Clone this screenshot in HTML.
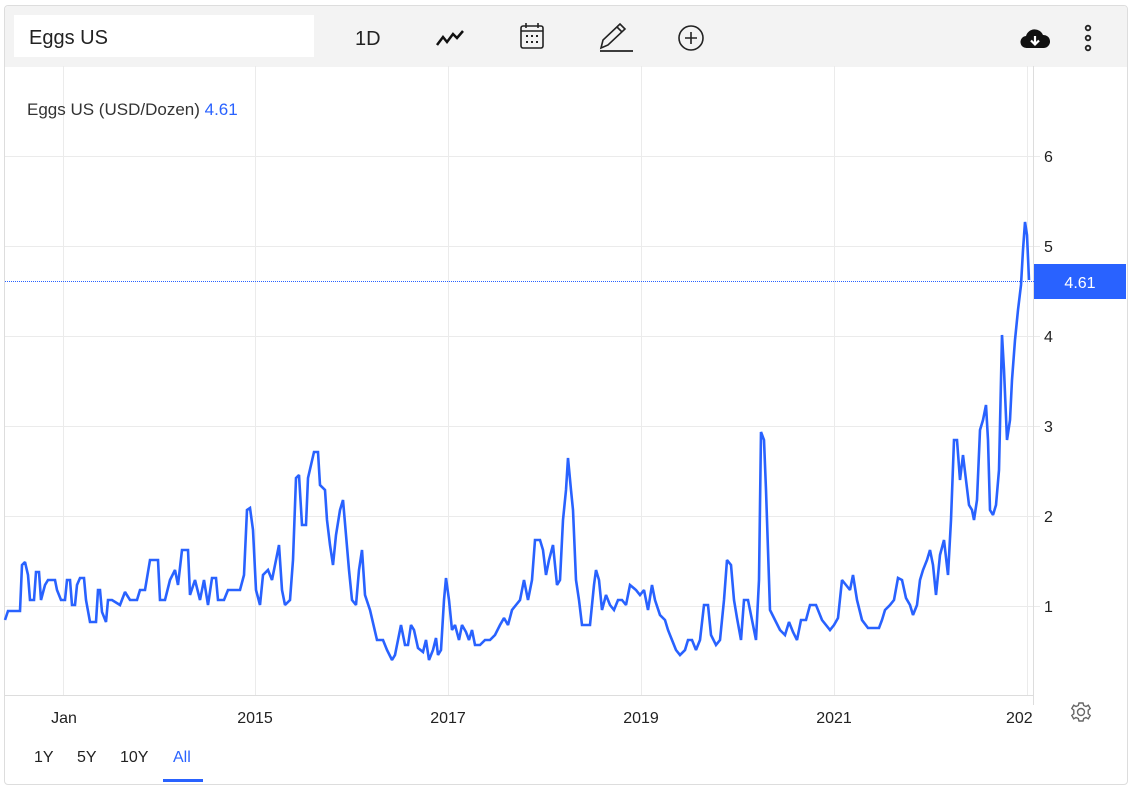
<!DOCTYPE html>
<html><head><meta charset="utf-8"><style>
*{margin:0;padding:0;box-sizing:border-box}
body{width:1138px;height:789px;background:#fff;font-family:"Liberation Sans",Arial,sans-serif;position:relative;overflow:hidden;color:#222}
.frame{position:absolute;left:4px;top:5px;width:1124px;height:780px;border:1px solid #ddd;border-radius:4px;overflow:hidden}
.tb{position:absolute;left:0;top:0;width:100%;height:61px;background:#f3f3f3}
.search{position:absolute;left:9px;top:9px;width:300px;height:42px;background:#fff;font-size:20px;line-height:46px;padding-left:15px;color:#222}
</style></head><body>
<div class="frame">
<div class="tb">
<div class="search">Eggs US</div>
<div style="position:absolute;left:350px;top:22px;font-size:20px;color:#222">1D</div>
<svg style="position:absolute;left:430px;top:22px" width="30" height="20" viewBox="0 0 30 20"><path d="M2 17 L8 9 L12 14 L18 6 L22 10 L28 3" fill="none" stroke="#111" stroke-width="2.5"/></svg>
<svg style="position:absolute;left:513px;top:15px" width="28" height="30" viewBox="0 0 28 30"><rect x="3" y="5" width="22" height="22" rx="2" fill="none" stroke="#222" stroke-width="1.6"/><line x1="3" y1="10" x2="25" y2="10" stroke="#222" stroke-width="1.6"/><line x1="8" y1="2" x2="8" y2="7" stroke="#222" stroke-width="1.6"/><line x1="20" y1="2" x2="20" y2="7" stroke="#222" stroke-width="1.6"/><g fill="#222"><rect x="8" y="14" width="2" height="2"/><rect x="13" y="14" width="2" height="2"/><rect x="18" y="14" width="2" height="2"/><rect x="8" y="20" width="2" height="2"/><rect x="13" y="20" width="2" height="2"/><rect x="18" y="20" width="2" height="2"/></g></svg>
<svg style="position:absolute;left:592px;top:15px" width="38" height="32" viewBox="0 0 38 32"><path d="M4 27 L6 19 L23 3 L28 8 L11 24 Z M20 6 L25 11" fill="none" stroke="#222" stroke-width="1.6"/><line x1="3" y1="30" x2="36" y2="30" stroke="#222" stroke-width="1.8"/></svg>
<svg style="position:absolute;left:672px;top:18px" width="28" height="28" viewBox="0 0 28 28"><circle cx="14" cy="14" r="12" fill="none" stroke="#222" stroke-width="1.6"/><path d="M14 8V20M8 14H20" stroke="#222" stroke-width="1.6"/></svg>
<svg style="position:absolute;left:1014px;top:21px" width="32" height="24" viewBox="0 0 32 24"><path d="M8 21 A6 6 0 0 1 7 9 A9 9 0 0 1 24 8 A6.5 6.5 0 0 1 25 21 Z" fill="#111"/><path d="M16 9V17M12 13.5L16 17.5L20 13.5" stroke="#fff" stroke-width="2.2" fill="none"/></svg>
<svg style="position:absolute;left:1078px;top:18px" width="10" height="28" viewBox="0 0 10 28"><g fill="none" stroke="#222" stroke-width="1.8"><circle cx="5" cy="4" r="2.3"/><circle cx="5" cy="14" r="2.3"/><circle cx="5" cy="24" r="2.3"/></g></svg>
</div>
</div>
<svg style="position:absolute;left:0;top:0" width="1138" height="789">
<g stroke="#ebebeb" stroke-width="1">
<line x1="63.5" y1="66" x2="63.5" y2="695"/><line x1="255.5" y1="66" x2="255.5" y2="695"/><line x1="448.5" y1="66" x2="448.5" y2="695"/><line x1="641.5" y1="66" x2="641.5" y2="695"/><line x1="834.5" y1="66" x2="834.5" y2="695"/><line x1="1027.5" y1="66" x2="1027.5" y2="695"/>
<line x1="5" y1="156.5" x2="1040" y2="156.5"/><line x1="5" y1="246.5" x2="1040" y2="246.5"/><line x1="5" y1="336.5" x2="1040" y2="336.5"/><line x1="5" y1="426.5" x2="1040" y2="426.5"/><line x1="5" y1="516.5" x2="1040" y2="516.5"/><line x1="5" y1="606.5" x2="1040" y2="606.5"/>
</g>
<line x1="5" y1="695.5" x2="1033" y2="695.5" stroke="#ddd"/>
<line x1="1033.5" y1="66" x2="1033.5" y2="705" stroke="#ddd"/>
<line x1="5" y1="281.5" x2="1034" y2="281.5" stroke="#2962ff" stroke-width="1" stroke-dasharray="1 1"/>
<polyline fill="none" stroke="#2962ff" stroke-width="2.6" stroke-linejoin="miter" stroke-miterlimit="2" points="5,620 8,611 20,611 22,565 25,562 28,575 30,600 34,600 36,572 39,572 41,600 45,585 48,580 55,580 57,590 61,600 65,600 67,580 70,580 72,605 75,605 77,585 80,578 84,578 86,600 90,622 96,622 98,590 100,590 102,612 106,622 108,600 112,600 120,605 125,592 130,600 137,600 140,590 145,590 150,560 158,560 160,600 165,600 170,580 175,570 178,585 182,550 188,550 190,595 195,580 200,600 204,580 208,605 212,578 216,578 218,600 224,600 228,590 240,590 244,575 247,510 250,508 253,530 256,590 260,605 263,575 268,570 272,580 276,560 279,545 282,590 285,605 290,600 293,560 296,478 299,475 302,525 306,525 308,478 311,465 314,452 318,452 320,485 325,490 327,520 330,545 333,565 336,535 340,510 343,500 346,535 349,570 352,600 356,605 359,570 362,550 365,595 370,610 377,640 383,640 387,650 392,660 395,655 398,640 401,625 405,645 408,645 411,625 414,630 418,648 423,652 426,640 429,660 433,650 436,638 438,655 441,650 444,600 446,578 449,600 452,630 455,625 459,640 462,625 466,632 469,640 472,630 475,645 480,645 485,640 490,640 495,635 500,625 504,618 508,625 512,610 516,605 520,600 524,580 528,600 532,580 535,540 540,540 543,550 546,575 549,560 553,545 557,585 560,580 563,520 566,490 568,458 571,490 573,510 576,580 579,600 582,625 590,625 594,585 596,570 599,580 602,610 606,595 610,605 614,610 618,600 622,600 626,605 630,585 636,590 640,595 644,590 648,610 652,585 655,600 660,615 665,620 668,630 672,640 676,650 680,655 685,650 688,640 692,640 696,650 700,640 704,605 708,605 711,635 716,645 720,640 724,600 727,560 731,565 734,600 737,618 741,640 744,600 748,600 752,620 756,640 759,580 761,432 764,440 766,490 768,550 770,610 775,620 780,630 785,635 789,622 793,632 797,640 801,620 806,620 810,605 816,605 822,620 830,630 834,625 838,618 842,580 846,585 850,590 853,575 857,600 862,620 868,628 879,628 882,620 885,610 890,605 894,600 898,578 902,580 906,598 910,605 913,615 917,605 920,580 923,570 927,560 930,550 933,565 936,595 940,555 944,540 948,575 951,520 954,440 957,440 960,480 963,455 966,480 969,505 972,510 974,520 977,500 980,430 983,420 986,405 988,440 990,510 993,515 996,505 999,470 1002,335 1004,370 1007,440 1010,420 1012,380 1015,340 1018,310 1021,285 1023,250 1025,222 1027,235 1029,280"/>
<rect x="1034" y="264" width="92" height="35" fill="#2962ff"/>
<text x="1080" y="288" fill="#fff" font-size="16" text-anchor="middle" font-family="Liberation Sans">4.61</text>
<g font-size="16" fill="#222" font-family="Liberation Sans"><text x="1044" y="162">6</text><text x="1044" y="252">5</text><text x="1044" y="342">4</text><text x="1044" y="432">3</text><text x="1044" y="522">2</text><text x="1044" y="612">1</text></g>
<g font-size="16" fill="#222" font-family="Liberation Sans" text-anchor="middle"><text x="64" y="723">Jan</text><text x="255" y="723">2015</text><text x="448" y="723">2017</text><text x="641" y="723">2019</text><text x="834" y="723">2021</text></g>
<text x="1006" y="723" font-size="16" fill="#222" font-family="Liberation Sans">202</text>
<rect x="1035" y="700" width="90" height="30" fill="#fff"/>
<g transform="translate(1081,712)" fill="none" stroke="#666" stroke-width="1.4"><circle r="3.5"/><path d="M-2 -9 L2 -9 L2.7 -6.5 L5 -5.5 L7.3 -6.8 L9.2 -3.5 L7.2 -1.8 L7.2 1.8 L9.2 3.5 L7.3 6.8 L5 5.5 L2.7 6.5 L2 9 L-2 9 L-2.7 6.5 L-5 5.5 L-7.3 6.8 L-9.2 3.5 L-7.2 1.8 L-7.2 -1.8 L-9.2 -3.5 L-7.3 -6.8 L-5 -5.5 L-2.7 -6.5 Z"/></g>
<g font-size="16" font-family="Liberation Sans" fill="#222"><text x="34" y="762">1Y</text><text x="77" y="762">5Y</text><text x="120" y="762">10Y</text><text x="173" y="762" fill="#2962ff">All</text></g>
<rect x="163" y="779" width="40" height="3" fill="#2962ff"/>
<text x="27" y="115" font-size="17" fill="#333" font-family="Liberation Sans">Eggs US (USD/Dozen) <tspan fill="#2962ff">4.61</tspan></text>
</svg>
</body></html>
